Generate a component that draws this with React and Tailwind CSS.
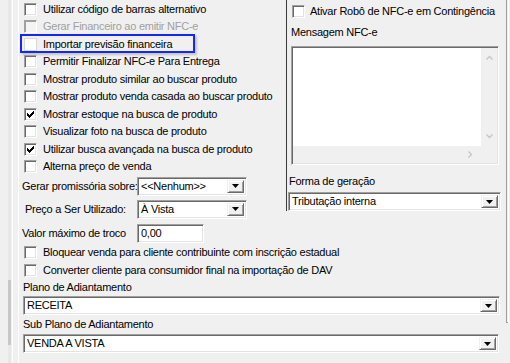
import React from "react";

const sunken =
  "border border-t-[#a0a0a0] border-l-[#a0a0a0] border-r-white border-b-white shadow-[inset_1px_1px_0_#696969,inset_-1px_-1px_0_#e3e3e3]";

function Check() {
  return (
    <svg width="7" height="7" viewBox="0 0 7 7" className="block">
      <path d="M0 2h1v1h1v1h1v-1h1v-1h1v-1h1v-1h1v3h-1v1h-1v1h-1v1h-1v1h-1v-1h-1v-1h-1z" fill="#000" />
    </svg>
  );
}

function Box({ checked, disabled, faded }) {
  return (
    <div
      className={`w-[13px] h-[13px] shrink-0 flex items-center justify-center ${
        faded
          ? "border border-[#d8d8d8] bg-white"
          : disabled
          ? "border border-t-[#a0a0a0] border-l-[#a0a0a0] border-r-white border-b-white shadow-[inset_1px_1px_0_#a0a0a0] bg-[#f4f4f4]"
          : sunken + " bg-white"
      }`}
    >
      {checked && <Check />}
    </div>
  );
}

function CheckRow({ label, checked, disabled, focus, h = "h-[18px]" }) {
  return (
    <div className={`${h} flex items-center relative`}>
      <div className="ml-[4px]">
        <Box checked={checked} disabled={disabled} faded={focus} />
      </div>
      <span className={`ml-[6px] whitespace-nowrap ${disabled ? "text-[#a0a0a0]" : ""}`}>{label}</span>
      {focus && (
        <div className="absolute left-0 top-[-1px] w-[175px] h-[19px] border-2 border-[#1428f0] shadow-[2px_2px_2px_rgba(0,0,0,0.18)]" />
      )}
    </div>
  );
}

function Arrow() {
  return (
    <div className="w-[17px] self-stretch shrink-0 bg-[#f0f0f0] border border-t-[#f0f0f0] border-l-[#f0f0f0] border-r-[#696969] border-b-[#696969] shadow-[inset_1px_1px_0_#ffffff,inset_-1px_-1px_0_#a0a0a0] flex items-center justify-center">
      <svg width="7" height="4" viewBox="0 0 7 4" className="block">
        <path d="M0 0h7l-3.5 4z" fill="#000" />
      </svg>
    </div>
  );
}

function Combo({ value, className }) {
  return (
    <div className={`${sunken} bg-white flex items-stretch p-[2px] ${className}`}>
      <div className="flex-1 flex items-center pl-[1px] whitespace-nowrap">{value}</div>
      <Arrow />
    </div>
  );
}

function Chev({ rot }) {
  return (
    <svg width="7" height="5" viewBox="0 0 7 5" className={`block ${rot}`}>
      <path d="M0.5 4.5L3.5 1.5L6.5 4.5" stroke="#c4c4c4" strokeWidth="1.3" fill="none" />
    </svg>
  );
}

export default function App() {
  return (
    <div className="w-[510px] h-[363px] bg-[#f0f0f0] flex overflow-hidden text-black font-['Liberation_Sans',Arial,sans-serif] text-[11px] tracking-[-0.25px] leading-none">
      {/* left strip */}
      <div className="w-[20px] h-full flex shrink-0">
        <div className="w-[8px]" />
        <div className="w-[3px] flex flex-col">
          <div className="h-[280px] bg-[#e8e8e8]" />
          <div className="h-[65px] bg-[#c8c8c8]" />
          <div className="flex-1 bg-[#e8e8e8]" />
        </div>
        <div className="w-[1px]" />
        <div className="w-[1px] bg-white" />
        <div className="w-[5px]" />
        <div className="w-[1px] bg-white" />
      </div>

      {/* main */}
      <div className="w-[486px] flex flex-col shrink-0">
        <div className="flex">
          {/* left column */}
          <div className="w-[266px] flex flex-col">
            <CheckRow label="Utilizar código de barras alternativo" />
            <CheckRow label="Gerar Financeiro ao emitir NFC-e" disabled h="h-[17px]" />
            <CheckRow label="Importar previsão financeira" focus />
            <CheckRow label="Permitir Finalizar NFC-e Para Entrega" h="h-[17px]" />
            <CheckRow label="Mostrar produto similar ao buscar produto" />
            <CheckRow label="Mostrar produto venda casada ao buscar produto" h="h-[17px]" />
            <CheckRow label="Mostrar estoque na busca de produto" checked />
            <CheckRow label="Visualizar foto na busca de produto" h="h-[17px]" />
            <CheckRow label="Utilizar busca avançada na busca de produto" checked />
            <CheckRow label="Alterna preço de venda" h="h-[17px]" />
            <div className="h-[22px] flex items-center">
              <span className="ml-[2px] w-[115px] whitespace-nowrap">Gerar promissória sobre:</span>
              <Combo value="<<Nenhum>>" className="w-[110px] h-[19px]" />
            </div>
            <div className="h-[24px] flex items-center">
              <span className="ml-[5px] w-[112px] whitespace-nowrap">Preço a Ser Utilizado:</span>
              <Combo value="À Vista" className="w-[110px] h-[19px]" />
            </div>
          </div>

          {/* right group */}
          <div className="w-[220px] h-[211px] border-l border-[#3c3c3c] flex flex-col">
            <div className="h-[22px] flex items-center pl-[5px]">
              <Box />
              <span className="ml-[5px] whitespace-nowrap">Ativar Robô de NFC-e em Contingência</span>
            </div>
            <div className="h-[20px] flex items-center pl-[4px]">Mensagem NFC-e</div>
            <div className={`${sunken} ml-[4px] w-[208px] h-[119px] mt-[4px] bg-white flex flex-col p-[1px]`}>
              <div className="flex flex-1">
                <div className="flex-1 bg-white" />
                <div className="w-[16px] bg-[#f0f0f0] flex flex-col items-center justify-between py-[7px]">
                  <Chev />
                  <Chev rot="rotate-180" />
                </div>
              </div>
              <div className="h-[17px] flex">
                <div className="flex-1 bg-[#f0f0f0] flex items-center justify-end pr-[7px]">
                  <Chev rot="rotate-90" />
                </div>
                <div className="w-[16px] bg-[#f0f0f0]" />
              </div>
            </div>
            <div className="h-[27px] flex items-end pb-[5px] pl-[2px]">Forma de geração</div>
            <Combo value="Tributação interna" className="ml-[1px] w-[213px] h-[19px]" />
          </div>
        </div>

        {/* bottom */}
        <div className="flex flex-col">
          <div className="h-[22px] flex items-end">
            <span className="ml-[2px] w-[115px] whitespace-nowrap self-center mt-[3px]">Valor máximo de troco</span>
            <div className={`${sunken} w-[67px] h-[19px] bg-white flex items-center pl-[3px]`}>0,00</div>
          </div>
          <CheckRow label="Bloquear venda para cliente contribuinte com inscrição estadual" />
          <CheckRow label="Converter cliente para consumidor final na importação de DAV" />
          <div className="h-[17px] flex items-center ml-[3px]">Plano de Adiantamento</div>
          <Combo value="RECEITA" className="ml-[3px] w-[477px] h-[19px]" />
          <div className="h-[19px] flex items-center ml-[3px]">Sub Plano de Adiantamento</div>
          <Combo value="VENDA A VISTA" className="ml-[3px] w-[476px] h-[19px]" />
        </div>
      </div>

      {/* right edge */}
      <div className="w-[4px] shrink-0 flex flex-col">
        <div className="h-[323px] w-[2px] border-l border-b border-l-[#a0a0a0] border-b-[#a0a0a0] shadow-[1px_0_0_#ffffff]" />
      </div>
    </div>
  );
}
